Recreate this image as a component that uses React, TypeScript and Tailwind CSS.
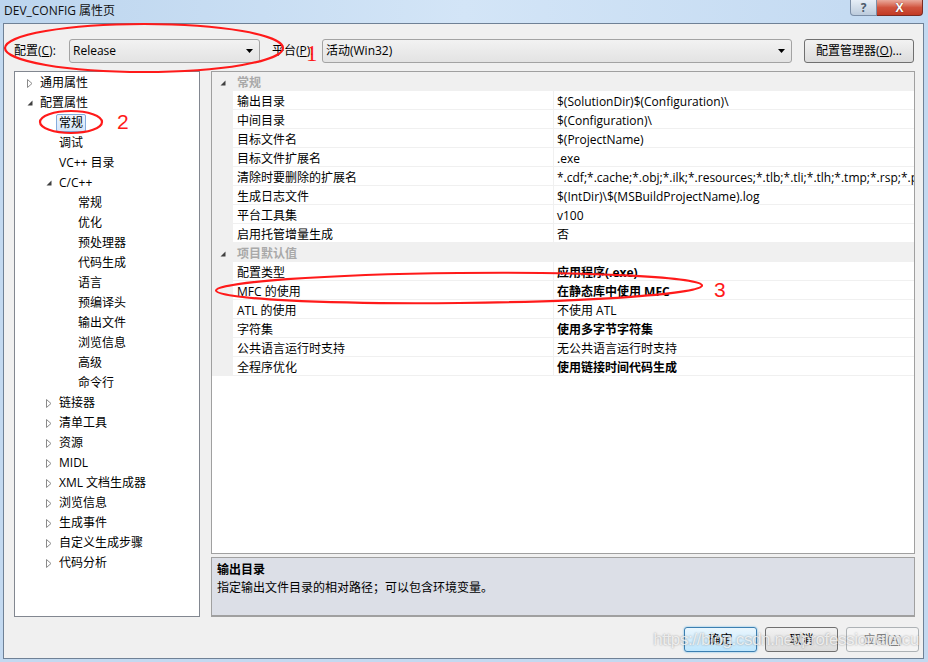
import React from "react";

type TreeItem = {
  label: string;
  level: 0 | 1 | 2;
  state?: "open" | "closed";
  selected?: boolean;
};

const tree: TreeItem[] = [
  { label: "通用属性", level: 0, state: "closed" },
  { label: "配置属性", level: 0, state: "open" },
  { label: "常规", level: 1, selected: true },
  { label: "调试", level: 1 },
  { label: "VC++ 目录", level: 1 },
  { label: "C/C++", level: 1, state: "open" },
  { label: "常规", level: 2 },
  { label: "优化", level: 2 },
  { label: "预处理器", level: 2 },
  { label: "代码生成", level: 2 },
  { label: "语言", level: 2 },
  { label: "预编译头", level: 2 },
  { label: "输出文件", level: 2 },
  { label: "浏览信息", level: 2 },
  { label: "高级", level: 2 },
  { label: "命令行", level: 2 },
  { label: "链接器", level: 1, state: "closed" },
  { label: "清单工具", level: 1, state: "closed" },
  { label: "资源", level: 1, state: "closed" },
  { label: "MIDL", level: 1, state: "closed" },
  { label: "XML 文档生成器", level: 1, state: "closed" },
  { label: "浏览信息", level: 1, state: "closed" },
  { label: "生成事件", level: 1, state: "closed" },
  { label: "自定义生成步骤", level: 1, state: "closed" },
  { label: "代码分析", level: 1, state: "closed" },
];

type Prop = { name: string; value: string; bold?: boolean };

const groups: { title: string; rows: Prop[] }[] = [
  {
    title: "常规",
    rows: [
      { name: "输出目录", value: "$(SolutionDir)$(Configuration)\\" },
      { name: "中间目录", value: "$(Configuration)\\" },
      { name: "目标文件名", value: "$(ProjectName)" },
      { name: "目标文件扩展名", value: ".exe" },
      {
        name: "清除时要删除的扩展名",
        value: "*.cdf;*.cache;*.obj;*.ilk;*.resources;*.tlb;*.tli;*.tlh;*.tmp;*.rsp;*.pgc",
      },
      { name: "生成日志文件", value: "$(IntDir)\\$(MSBuildProjectName).log" },
      { name: "平台工具集", value: "v100" },
      { name: "启用托管增量生成", value: "否" },
    ],
  },
  {
    title: "项目默认值",
    rows: [
      { name: "配置类型", value: "应用程序(.exe)", bold: true },
      { name: "MFC 的使用", value: "在静态库中使用 MFC", bold: true },
      { name: "ATL 的使用", value: "不使用 ATL" },
      { name: "字符集", value: "使用多字节字符集", bold: true },
      { name: "公共语言运行时支持", value: "无公共语言运行时支持" },
      { name: "全程序优化", value: "使用链接时间代码生成", bold: true },
    ],
  },
];

const levelPad = ["pl-[10px]", "pl-[29px]", "pl-[48px]"];

const Expanded = () => (
  <svg width="6" height="6" viewBox="0 0 6 6" className="ml-[2px]">
    <path d="M5.5 0.5 L5.5 5.5 L0.5 5.5 Z" fill="#404040" />
  </svg>
);

const Collapsed = () => (
  <svg width="6" height="9" viewBox="0 0 6 9" className="ml-[2px]">
    <path d="M0.5 0.5 L5 4.5 L0.5 8.5 Z" fill="none" stroke="#8a8a8a" />
  </svg>
);

const Arrow = () => (
  <svg width="8" height="4" viewBox="0 0 8 4">
    <path d="M0 0 L7 0 L3.5 4 Z" fill="#000" />
  </svg>
);

const Dropdown = ({ text, width }: { text: string; width: string }) => (
  <div
    className={`${width} h-[24px] flex items-center justify-between pl-[3px] pr-[5px] rounded-[3px] border border-[#a3a3a3] bg-gradient-to-b from-[#f2f2f2] to-[#e3e3e3]`}
  >
    <span>{text}</span>
    <Arrow />
  </div>
);

export default function App() {
  return (
    <div className="relative w-[928px] h-[662px] overflow-hidden bg-[#c3d9f0] text-[12px] text-black font-['Open_Sans','Noto_Sans_CJK_SC',sans-serif]">
      {/* title bar */}
      <div className="h-[23px] flex justify-between bg-gradient-to-r from-[#bcd5ee] via-[#d3e5f7] to-[#c2d9f1]">
        <div className="pl-[4px] pt-[3px] leading-[16px] text-[#111]">DEV_CONFIG 属性页</div>
        <div className="flex mr-[5px] h-[16px]">
          <div className="w-[27px] h-[16px] flex items-center justify-center rounded-bl-[4px] border border-t-0 border-[#7b8ea7] bg-gradient-to-b from-[#e6eef7] to-[#bccbdc] text-[12px] font-bold leading-none text-[#4c5a6b]">
            ?
          </div>
          <div className="w-[46px] h-[16px] flex items-center justify-center rounded-br-[4px] border border-t-0 border-l-0 border-[#7a2b22] bg-gradient-to-b from-[#e9a99c] via-[#d0533e] to-[#c23a24] text-[12px] font-bold leading-none text-white [text-shadow:0_0_1px_#3a1008]">
            X
          </div>
        </div>
      </div>

      {/* client area */}
      <div className="ml-[3px] w-[921px] h-[636px] border border-[#6f8196] bg-[#f0f0f0] flex flex-col">
        {/* configuration row */}
        <div className="mt-[14px] pl-[10px] h-[25px] flex items-center">
          <span className="w-[55px]">
            配置(<span className="underline">C</span>):
          </span>
          <Dropdown text="Release" width="w-[191px]" />
          <span className="ml-[12px] w-[50px]">
            平台(<span className="underline">P</span>):
          </span>
          <Dropdown text="活动(Win32)" width="w-[470px]" />
          <div className="ml-[12px] w-[110px] h-[24px] flex items-center justify-center rounded-[3px] border border-[#707070] bg-gradient-to-b from-[#f2f2f2] to-[#dcdcdc]">
            配置管理器(<span className="underline">O</span>)...
          </div>
        </div>

        {/* main area */}
        <div className="mt-[8px] pl-[10px] h-[546px] flex">
          {/* tree */}
          <div className="w-[186px] h-full border border-[#828790] bg-white">
            {tree.map((item, i) => (
              <div key={i} className={`h-[20px] pt-[2px] flex items-center ${levelPad[item.level]}`}>
                <div className="w-[15px] flex items-center">
                  {item.state === "open" && <Expanded />}
                  {item.state === "closed" && <Collapsed />}
                </div>
                {item.selected ? (
                  <span className="-ml-[3px] h-[18px] px-[2px] flex items-center rounded-[2px] border border-[#84acdd] bg-gradient-to-b from-[#eef5fd] to-[#d5e6fb]">
                    {item.label}
                  </span>
                ) : (
                  <span>{item.label}</span>
                )}
              </div>
            ))}
          </div>

          {/* property grid + description */}
          <div className="ml-[11px] w-[704px] h-full flex flex-col">
            <div className="h-[483px] border border-[#a0a0a0] bg-white overflow-hidden">
              {groups.map((g) => (
                <div key={g.title}>
                  <div className="h-[19px] pt-[3px] flex items-center bg-[#f0f0f0] border-b border-[#f0f0f0]">
                    <div className="w-[21px] pl-[8px] flex items-center">
                      <svg width="6" height="6" viewBox="0 0 6 6">
                        <path d="M5.5 0.5 L5.5 5.5 L0.5 5.5 Z" fill="#404040" />
                      </svg>
                    </div>
                    <span className="pl-[4px] font-bold text-[#a9a9a9]">{g.title}</span>
                  </div>
                  {g.rows.map((r) => (
                    <div key={r.name} className="h-[19px] flex border-b border-[#f0f0f0]">
                      <div className="w-[21px] bg-[#f0f0f0]" />
                      <div className="w-[320px] pl-[4px] pt-[3px] flex items-center">{r.name}</div>
                      <div
                        className={`flex-1 pl-[3px] pt-[3px] flex items-center whitespace-nowrap overflow-hidden border-l border-[#f0f0f0] ${
                          r.bold ? "font-bold" : ""
                        }`}
                      >
                        {r.value}
                      </div>
                    </div>
                  ))}
                </div>
              ))}
            </div>
            <div className="mt-[3px] h-[60px] border border-b-2 border-[#a0a0a0] bg-[#dcdfe7] px-[5px] pt-[2px]">
              <div className="font-bold leading-[19px]">输出目录</div>
              <div className="leading-[18px]">指定输出文件目录的相对路径；可以包含环境变量。</div>
            </div>
          </div>
        </div>

        {/* bottom buttons */}
        <div className="relative mt-[10px] h-[25px] flex justify-end gap-[8px] pr-[4px]">
          <div className="w-[73px] h-[25px] flex items-center justify-center rounded-[3px] border border-[#3c7fb1] bg-gradient-to-b from-[#eaf6fd] to-[#bee6fd] shadow-[0_0_2px_#5ab4e8]">
            确定
          </div>
          <div className="w-[73px] h-[25px] flex items-center justify-center rounded-[3px] border border-[#707070] bg-gradient-to-b from-[#f2f2f2] to-[#dcdcdc]">
            取消
          </div>
          <div className="w-[73px] h-[25px] flex items-center justify-center rounded-[3px] border border-[#adb2b5] bg-[#f4f4f4] text-[#838383]">
            应用(<span className="underline">A</span>)
          </div>
          <div className="absolute right-[4px] top-[1px] text-[17px] leading-[24px] tracking-[-0.4px] font-['Liberation_Sans',sans-serif] text-white/75 [text-shadow:0_0_2px_rgba(90,90,90,0.6)] pointer-events-none">
            https://blog.csdn.net/professionalmcu
          </div>
        </div>
      </div>

      {/* red annotations */}
      <svg className="absolute left-0 top-0 pointer-events-none" width="928" height="662" viewBox="0 0 928 662">
        <g fill="none" stroke="#ff1a1a" strokeWidth="2.2">
          <ellipse cx="144" cy="48" rx="139" ry="24" />
          <ellipse cx="71" cy="122" rx="31" ry="11" />
          <ellipse cx="459" cy="288" rx="243" ry="15" transform="rotate(-0.6 459 288)" />
        </g>
        <g fill="#ff1a1a">
          <text x="306" y="61" fontSize="23" fontFamily="'Liberation Serif', serif">1</text>
          <text x="117" y="129" fontSize="21" fontFamily="'Liberation Sans', sans-serif">2</text>
          <text x="714" y="297" fontSize="21" fontFamily="'Liberation Sans', sans-serif">3</text>
        </g>
      </svg>
    </div>
  );
}
